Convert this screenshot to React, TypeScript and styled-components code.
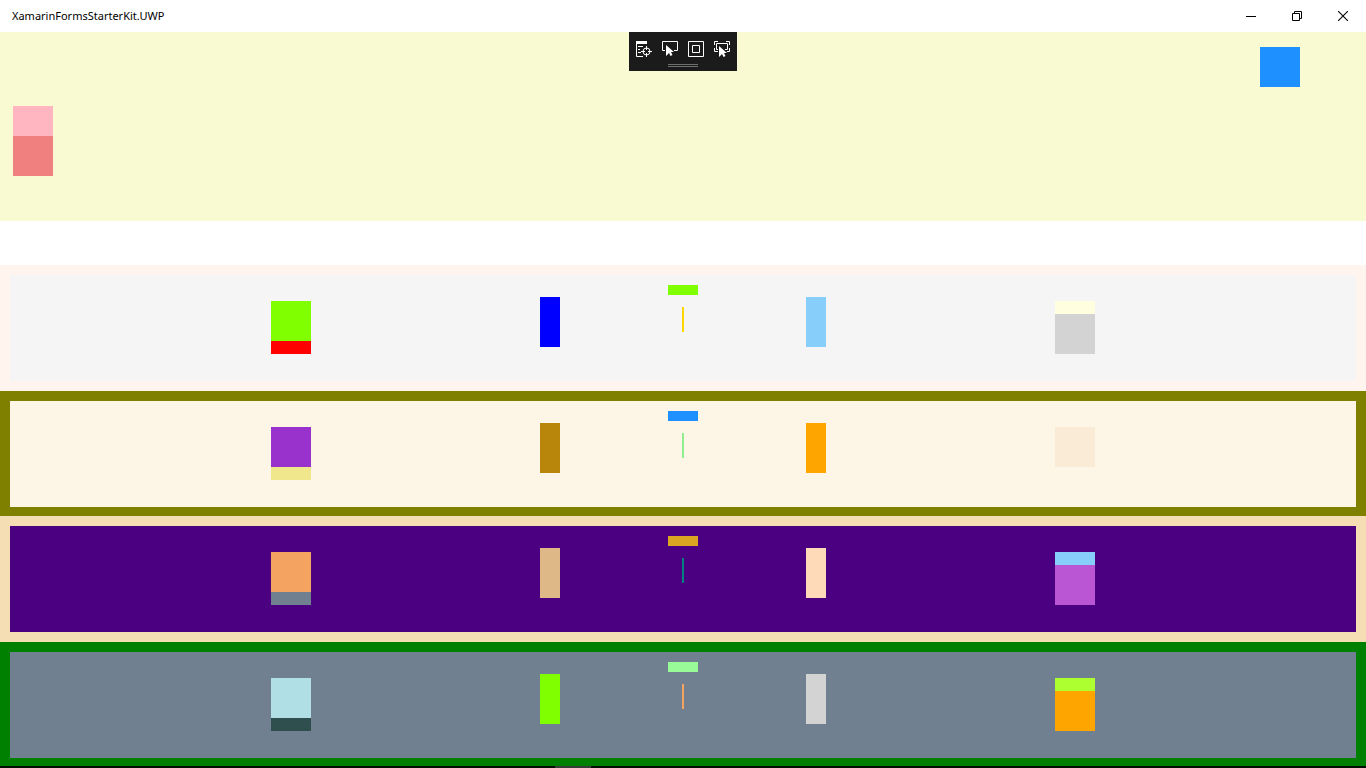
import React from 'react';
import styled, { createGlobalStyle } from 'styled-components';

const GlobalStyle = createGlobalStyle`
  body {
    margin: 0;
    background: #ffffff;
    font-family: "Noto Sans", "Open Sans", sans-serif;
  }
`;

const Page = styled.div`
  display: flex;
  flex-direction: column;
  min-height: 100vh;
`;

const TitleBar = styled.header`
  display: flex;
  align-items: stretch;
  justify-content: space-between;
  height: 32px;
`;

const Title = styled.h1`
  margin: 0;
  padding-left: 12px;
  font-size: 11px;
  line-height: 32px;
  font-weight: 400;
  color: #000000;
`;

const WindowControls = styled.div`
  display: flex;
`;

const IconButton = styled.button<{ $width: number }>`
  display: flex;
  align-items: center;
  justify-content: center;
  width: ${(p) => p.$width}px;
  padding: 0;
  border: 0;
  background: transparent;
  color: inherit;
`;

const Hero = styled.section`
  position: relative;
  display: flex;
  justify-content: space-between;
  height: 189px;
  box-sizing: border-box;
  padding: 15px 66px 45px 13px;
  background: #fafad2;
`;

const HeroStack = styled.div`
  align-self: flex-end;
`;

const Block = styled.div<{ $w: number; $h: number; $color: string }>`
  width: ${(p) => p.$w}px;
  height: ${(p) => p.$h}px;
  background: ${(p) => p.$color};
`;

const DebugToolbar = styled.div`
  position: absolute;
  top: 0;
  left: 50%;
  transform: translateX(-50%);
  box-sizing: border-box;
  height: 39px;
  padding: 9px 7px 0;
  background: #1b1b1c;
  color: #ffffff;
`;

const ToolRow = styled.div`
  display: flex;
  gap: 10px;
`;

const Grip = styled.div`
  width: 30px;
  height: 1px;
  margin: 7px auto 0;
  border: solid #6e6e6e;
  border-width: 1px 0;
`;

const Bands = styled.main`
  flex: 1;
  display: grid;
  grid-template-rows: repeat(4, 1fr);
  margin: 44px 0 1px;
`;

const Band = styled.section<{ $color: string }>`
  padding: 10px 10px 0;
  background: ${(p) => p.$color};
`;

const Panel = styled.div<{ $color: string }>`
  display: grid;
  grid-template-columns: 261fr 40px 229fr 20px 108fr 30px 108fr 20px 229fr 40px 261fr;
  height: 106px;
  background: ${(p) => p.$color};
`;

const Cell = styled.div<{ $column: number; $top: number }>`
  grid-column: ${(p) => p.$column};
  grid-row: 1;
  padding-top: ${(p) => p.$top}px;
`;

const CenterCell = styled(Cell)`
  display: flex;
  flex-direction: column;
  align-items: center;
  gap: 12px;
`;

const TaskbarEdge = styled.footer`
  position: fixed;
  left: 0;
  right: 0;
  bottom: 0;
  display: flex;
  height: 2px;
  padding-left: 555px;
  background: #001000;
`;

type BandData = {
  outer: string;
  inner: string;
  left: [string, string];
  leftBar: string;
  cap: string;
  line: string;
  rightBar: string;
  right: { color: string; height: number }[];
};

const bands: BandData[] = [
  {
    outer: '#fff5ee', inner: '#f5f5f5', left: ['#7fff00', '#ff0000'], leftBar: '#0000ff',
    cap: '#7fff00', line: '#ffd700', rightBar: '#87cefa',
    right: [{ color: '#ffffe0', height: 13 }, { color: '#d3d3d3', height: 40 }],
  },
  {
    outer: '#808000', inner: '#fdf5e6', left: ['#9932cc', '#f0e68c'], leftBar: '#b8860b',
    cap: '#1e90ff', line: '#90ee90', rightBar: '#ffa500',
    right: [{ color: '#faebd7', height: 40 }],
  },
  {
    outer: '#f5deb3', inner: '#4b0082', left: ['#f4a460', '#708090'], leftBar: '#deb887',
    cap: '#daa520', line: '#008080', rightBar: '#ffdab9',
    right: [{ color: '#87cefa', height: 13 }, { color: '#ba55d3', height: 40 }],
  },
  {
    outer: '#008000', inner: '#708090', left: ['#b0e0e6', '#2f4f4f'], leftBar: '#7fff00',
    cap: '#98fb98', line: '#f4a460', rightBar: '#d3d3d3',
    right: [{ color: '#adff2f', height: 13 }, { color: '#ffa500', height: 40 }],
  },
];

const cursor = 'M4 4v11l3-3 1.5 3 2-1L9 11h3z';

function ColorBand({ data }: { data: BandData }) {
  return (
    <Band $color={data.outer}>
      <Panel $color={data.inner}>
        <Cell $column={2} $top={26}>
          <Block $w={40} $h={40} $color={data.left[0]} />
          <Block $w={40} $h={13} $color={data.left[1]} />
        </Cell>
        <Cell $column={4} $top={22}>
          <Block $w={20} $h={50} $color={data.leftBar} />
        </Cell>
        <CenterCell $column={6} $top={10}>
          <Block $w={30} $h={10} $color={data.cap} />
          <Block $w={2} $h={25} $color={data.line} />
        </CenterCell>
        <Cell $column={8} $top={22}>
          <Block $w={20} $h={50} $color={data.rightBar} />
        </Cell>
        <Cell $column={10} $top={26}>
          {data.right.map((b) => (
            <Block key={b.color} $w={40} $h={b.height} $color={b.color} />
          ))}
        </Cell>
      </Panel>
    </Band>
  );
}

export default function App() {
  return (
    <>
      <GlobalStyle />
      <Page>
        <TitleBar>
          <Title>XamarinFormsStarterKit.UWP</Title>
          <WindowControls>
            <IconButton $width={46} aria-label="Minimize">
              <svg width="10" height="10" viewBox="0 0 10 10">
                <path d="M0 5h10v1H0z" fill="#000" />
              </svg>
            </IconButton>
            <IconButton $width={46} aria-label="Restore">
              <svg width="10" height="10" viewBox="0 0 10 10" fill="none" stroke="#000">
                <path d="M.5 2.5h7v7h-7zM2.5 2.5v-2h7v7h-2" />
              </svg>
            </IconButton>
            <IconButton $width={46} aria-label="Close">
              <svg width="10" height="10" viewBox="0 0 10 10" fill="none" stroke="#000">
                <path d="M0 0l10 10M10 0L0 10" strokeWidth="1.1" />
              </svg>
            </IconButton>
          </WindowControls>
        </TitleBar>
        <Hero>
          <HeroStack>
            <Block $w={40} $h={30} $color="#ffb6c1" />
            <Block $w={40} $h={40} $color="#f08080" />
          </HeroStack>
          <Block $w={40} $h={40} $color="#1e90ff" />
          <DebugToolbar>
            <ToolRow>
              <IconButton $width={16} aria-label="Go to Live Visual Tree">
                <svg width="16" height="16" viewBox="0 0 16 16" fill="none" stroke="#fff">
                  <path d="M0 0h11v3H0z" fill="#fff" stroke="none" />
                  <path d="M.5 3v12.5H7M2 5.5h5M2 8.5h2M2 11.5h3" />
                  <circle cx="10.5" cy="10.5" r="3.5" />
                  <path d="M10.5 5v4M10.5 12v4M5 10.5h4M12 10.5h4" />
                </svg>
              </IconButton>
              <IconButton $width={16} aria-label="Select element">
                <svg width="16" height="16" viewBox="0 0 16 16" fill="none" stroke="#fff">
                  <path d="M3 9.5H.5v-9h15v9H12" />
                  <path d={cursor} fill="#fff" stroke="none" />
                </svg>
              </IconButton>
              <IconButton $width={16} aria-label="Display layout adorners">
                <svg width="16" height="16" viewBox="0 0 16 16" fill="none" stroke="#fff">
                  <path d="M.5.5h15v15H.5zM4.5 4.5h7v7h-7z" />
                </svg>
              </IconButton>
              <IconButton $width={16} aria-label="Track focused element">
                <svg width="16" height="16" viewBox="0 0 16 16" fill="none" stroke="#fff">
                  <path d="M.5 4V.5H4M12 .5h3.5V4M15.5 7v3.5H13M.5 7v3.5H4M4 8.5H2.5v-6h11v6H11" />
                  <path d={cursor} transform="translate(1 1)" fill="#fff" stroke="#1b1b1c" paintOrder="stroke" />
                </svg>
              </IconButton>
            </ToolRow>
            <Grip />
          </DebugToolbar>
        </Hero>
        <Bands>
          {bands.map((b) => (
            <ColorBand key={b.outer} data={b} />
          ))}
        </Bands>
      </Page>
      <TaskbarEdge>
        <Block $w={36} $h={2} $color="#333f33" />
      </TaskbarEdge>
    </>
  );
}
